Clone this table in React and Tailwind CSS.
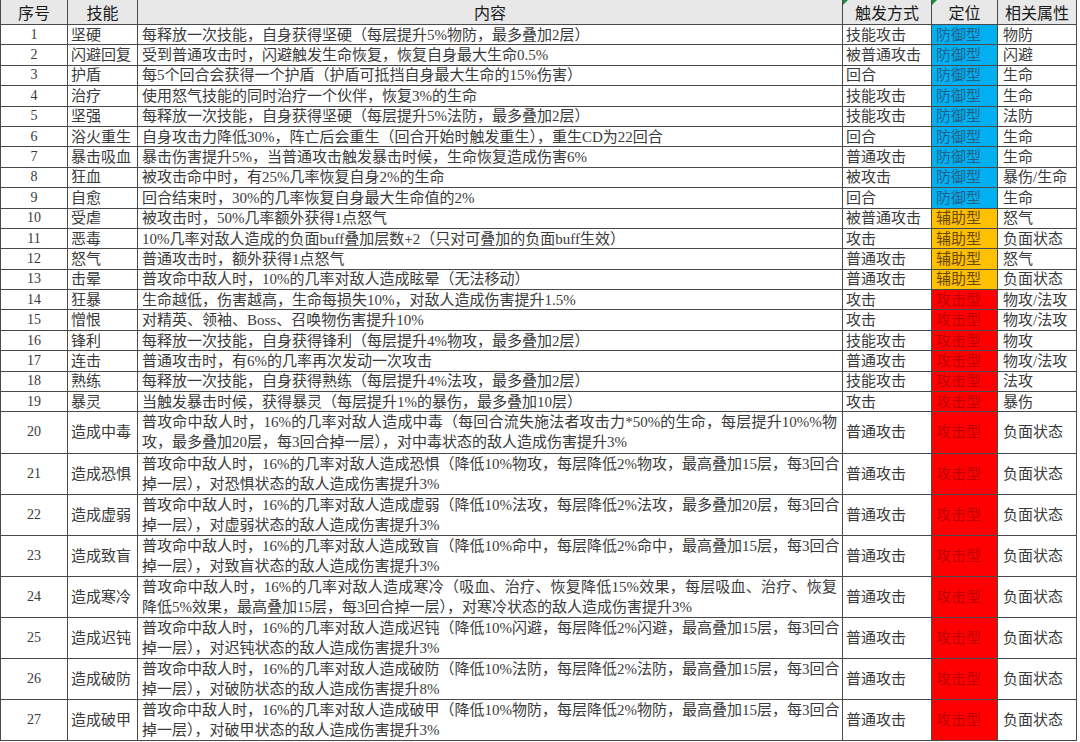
import React from 'react';

const COLS = 'grid grid-cols-[67px_70px_705px_89px_66px_79px]';

const TYPE_STYLE = {
  防御型: 'bg-[#00b0f0] text-[#245f88]',
  辅助型: 'bg-[#ffc000] text-[#6b4a00]',
  攻击型: 'bg-[#ff0000] text-[#c00000]',
};

const rows = [
  ['1', '坚硬', '每释放一次技能，自身获得坚硬（每层提升5%物防，最多叠加2层）', '技能攻击', '防御型', '物防'],
  ['2', '闪避回复', '受到普通攻击时，闪避触发生命恢复，恢复自身最大生命0.5%', '被普通攻击', '防御型', '闪避'],
  ['3', '护盾', '每5个回合会获得一个护盾（护盾可抵挡自身最大生命的15%伤害）', '回合', '防御型', '生命'],
  ['4', '治疗', '使用怒气技能的同时治疗一个伙伴，恢复3%的生命', '技能攻击', '防御型', '生命'],
  ['5', '坚强', '每释放一次技能，自身获得坚硬（每层提升5%法防，最多叠加2层）', '技能攻击', '防御型', '法防'],
  ['6', '浴火重生', '自身攻击力降低30%，阵亡后会重生（回合开始时触发重生），重生CD为22回合', '回合', '防御型', '生命'],
  ['7', '暴击吸血', '暴击伤害提升5%，当普通攻击触发暴击时候，生命恢复造成伤害6%', '普通攻击', '防御型', '生命'],
  ['8', '狂血', '被攻击命中时，有25%几率恢复自身2%的生命', '被攻击', '防御型', '暴伤/生命'],
  ['9', '自愈', '回合结束时，30%的几率恢复自身最大生命值的2%', '回合', '防御型', '生命'],
  ['10', '受虐', '被攻击时，50%几率额外获得1点怒气', '被普通攻击', '辅助型', '怒气'],
  ['11', '恶毒', '10%几率对敌人造成的负面buff叠加层数+2（只对可叠加的负面buff生效）', '攻击', '辅助型', '负面状态'],
  ['12', '怒气', '普通攻击时，额外获得1点怒气', '普通攻击', '辅助型', '怒气'],
  ['13', '击晕', '普攻命中敌人时，10%的几率对敌人造成眩晕（无法移动）', '普通攻击', '辅助型', '负面状态'],
  ['14', '狂暴', '生命越低，伤害越高，生命每损失10%，对敌人造成伤害提升1.5%', '攻击', '攻击型', '物攻/法攻'],
  ['15', '憎恨', '对精英、领袖、Boss、召唤物伤害提升10%', '攻击', '攻击型', '物攻/法攻'],
  ['16', '锋利', '每释放一次技能，自身获得锋利（每层提升4%物攻，最多叠加2层）', '技能攻击', '攻击型', '物攻'],
  ['17', '连击', '普通攻击时，有6%的几率再次发动一次攻击', '普通攻击', '攻击型', '物攻/法攻'],
  ['18', '熟练', '每释放一次技能，自身获得熟练（每层提升4%法攻，最多叠加2层）', '技能攻击', '攻击型', '法攻'],
  ['19', '暴灵', '当触发暴击时候，获得暴灵（每层提升1%的暴伤，最多叠加10层）', '攻击', '攻击型', '暴伤'],
];

const longRows = [
  ['20', '造成中毒', '普攻命中敌人时，16%的几率对敌人造成中毒（每回合流失施法者攻击力*50%的生命，每层提升10%%物', '攻，最多叠加20层，每3回合掉一层），对中毒状态的敌人造成伤害提升3%'],
  ['21', '造成恐惧', '普攻命中敌人时，16%的几率对敌人造成恐惧（降低10%物攻，每层降低2%物攻，最高叠加15层，每3回合', '掉一层），对恐惧状态的敌人造成伤害提升3%'],
  ['22', '造成虚弱', '普攻命中敌人时，16%的几率对敌人造成虚弱（降低10%法攻，每层降低2%法攻，最多叠加20层，每3回合', '掉一层），对虚弱状态的敌人造成伤害提升3%'],
  ['23', '造成致盲', '普攻命中敌人时，16%的几率对敌人造成致盲（降低10%命中，每层降低2%命中，最高叠加15层，每3回合', '掉一层），对致盲状态的敌人造成伤害提升3%'],
  ['24', '造成寒冷', '普攻命中敌人时，16%的几率对敌人造成寒冷（吸血、治疗、恢复降低15%效果，每层吸血、治疗、恢复', '降低5%效果，最高叠加15层，每3回合掉一层），对寒冷状态的敌人造成伤害提升3%'],
  ['25', '造成迟钝', '普攻命中敌人时，16%的几率对敌人造成迟钝（降低10%闪避，每层降低2%闪避，最高叠加15层，每3回合', '掉一层），对迟钝状态的敌人造成伤害提升3%'],
  ['26', '造成破防', '普攻命中敌人时，16%的几率对敌人造成破防（降低10%法防，每层降低2%法防，最高叠加15层，每3回合', '掉一层），对破防状态的敌人造成伤害提升8%'],
  ['27', '造成破甲', '普攻命中敌人时，16%的几率对敌人造成破甲（降低10%物防，每层降低2%物防，最高叠加15层，每3回合', '掉一层），对破甲状态的敌人造成伤害提升3%'],
];

const cell = 'border-r border-b border-[#4a4a4a] flex items-center overflow-hidden whitespace-nowrap';

const GreenFlag = () => (
  <span className="absolute left-0 top-0 w-0 h-0 border-t-[5px] border-r-[5px] border-t-[#1e8a3a] border-r-transparent" />
);

const Header = () => (
  <div className={`${COLS} h-[25px] bg-[#e8e8e8] text-[16px] text-[#1a1a1a] font-['Noto_Sans_CJK_SC',sans-serif]`}>
    <div className={`${cell} justify-center`}>序号</div>
    <div className={`${cell} justify-center`}>技能</div>
    <div className={`${cell} justify-center`}>内容</div>
    <div className={`${cell} justify-center relative`}><GreenFlag />触发方式</div>
    <div className={`${cell} justify-center relative`}><GreenFlag />定位</div>
    <div className={`${cell} justify-center`}>相关属性</div>
  </div>
);

const Row = ({ no, skill, lines, trigger, type, attr, tall }) => (
  <div className={`${COLS} ${tall ? 'h-[41.1px]' : 'h-[20.4px]'}`}>
    <div className={`${cell} justify-center font-['Liberation_Serif',serif] text-[14px]`}>{no}</div>
    <div className={`${cell} pl-[3px]`}>{skill}</div>
    <div className={`${cell} pl-[4px] pr-[5px]`}>
      <div className="w-full">
        {lines.map((line, i) => (
          <div
            key={i}
            className={i === 0 && lines.length > 1 ? 'text-justify [text-align-last:justify]' : ''}
          >
            {line}
          </div>
        ))}
      </div>
    </div>
    <div className={`${cell} pl-[3px]`}>{trigger}</div>
    <div className={`${cell} pl-[4px] ${TYPE_STYLE[type]}`}>{type}</div>
    <div className={`${cell} pl-[5px]`}>{attr}</div>
  </div>
);

export default function App() {
  return (
    <div className="w-[1080px] h-[742px] overflow-hidden bg-white">
      <div className="w-[1077px] border-l border-[#4a4a4a] text-[15px] leading-[20px] text-[#3a3a3a] font-['Liberation_Serif','Noto_Sans_CJK_SC',serif]">
        <Header />
        {rows.map(([no, skill, content, trigger, type, attr]) => (
          <Row key={no} no={no} skill={skill} lines={[content]} trigger={trigger} type={type} attr={attr} />
        ))}
        {longRows.map(([no, skill, l1, l2]) => (
          <Row
            key={no}
            no={no}
            skill={skill}
            lines={[l1, l2]}
            trigger="普通攻击"
            type="攻击型"
            attr="负面状态"
            tall
          />
        ))}
      </div>
    </div>
  );
}
